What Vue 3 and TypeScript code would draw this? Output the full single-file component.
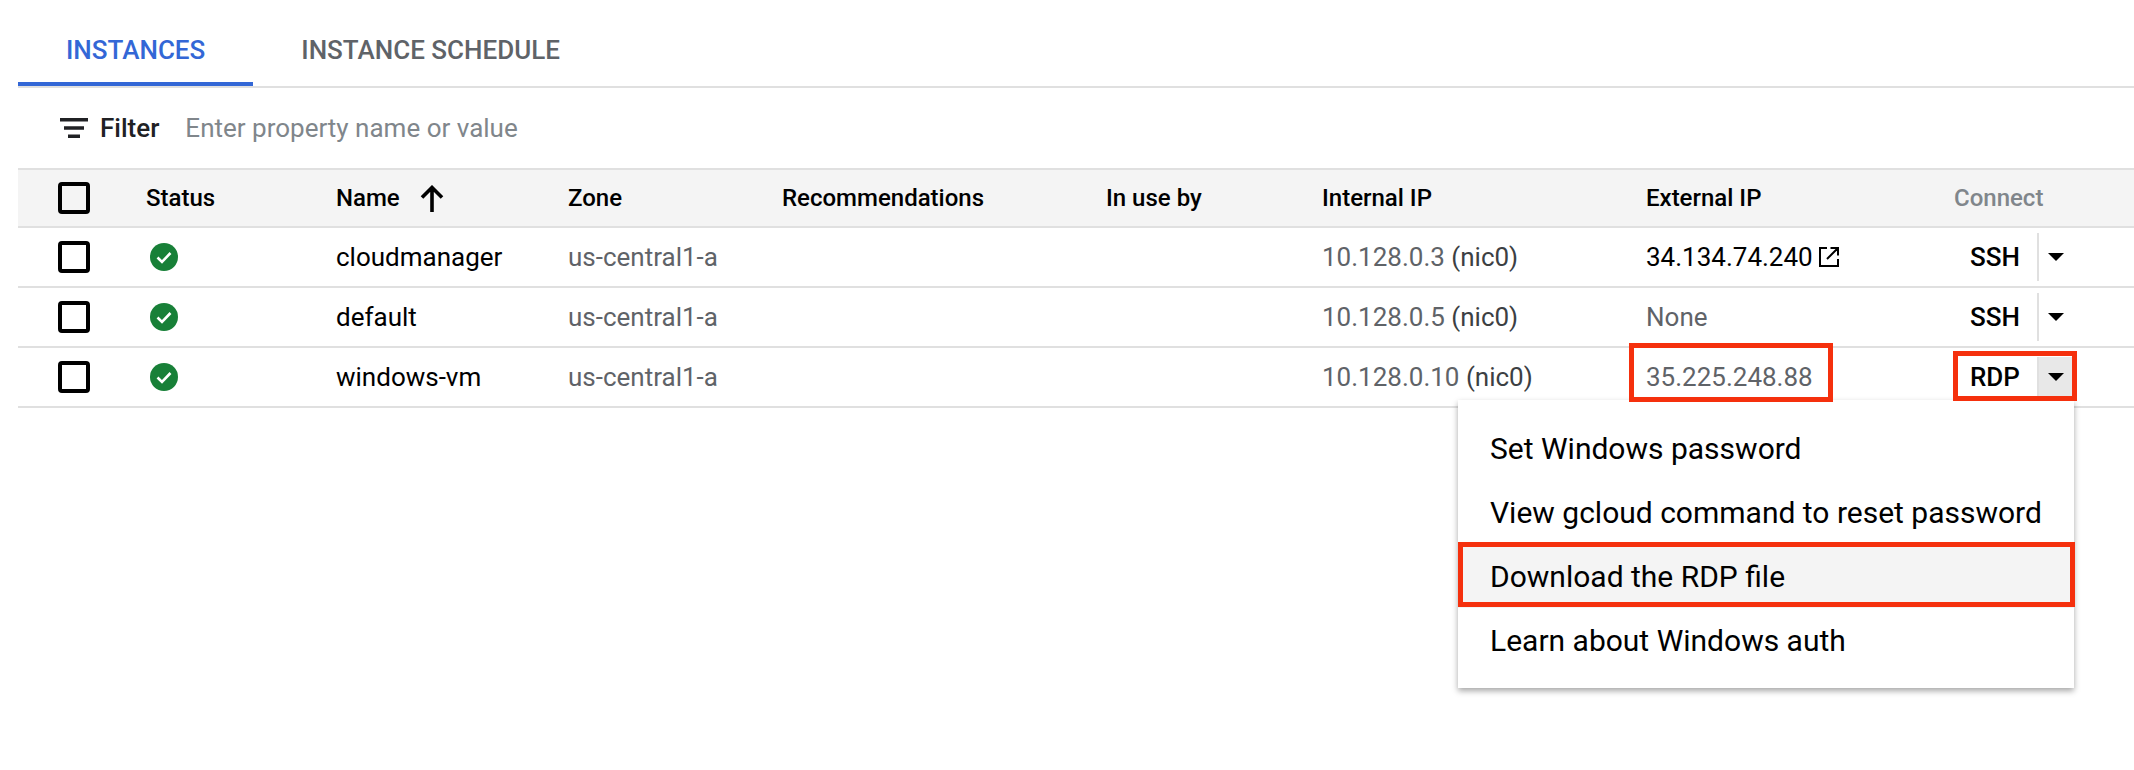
<script setup lang="ts">
interface Row {
  name: string
  zone: string
  internalIp: string
  externalIp: string
  externalKind: 'link' | 'none' | 'plain'
  connect: string
  open?: boolean
}

const rows: Row[] = [
  { name: 'cloudmanager', zone: 'us-central1-a', internalIp: '10.128.0.3', externalIp: '34.134.74.240', externalKind: 'link', connect: 'SSH' },
  { name: 'default', zone: 'us-central1-a', internalIp: '10.128.0.5', externalIp: 'None', externalKind: 'none', connect: 'SSH' },
  { name: 'windows-vm', zone: 'us-central1-a', internalIp: '10.128.0.10', externalIp: '35.225.248.88', externalKind: 'plain', connect: 'RDP', open: true },
]

const menuItems = [
  'Set Windows password',
  'View gcloud command to reset password',
  'Download the RDP file',
  'Learn about Windows auth',
]
</script>

<template>
  <div class="page">
    <nav class="tabs">
      <button class="tab active">INSTANCES</button>
      <button class="tab">INSTANCE SCHEDULE</button>
    </nav>

    <div class="filter">
      <svg class="filter-icon" width="28" height="20" viewBox="0 0 28 20">
        <path d="M0 0h28v3.5H0zM4 8.2h20v3.5H4zM8 16.5h12V20H8z" fill="#202124" />
      </svg>
      <span class="filter-label">Filter</span>
      <span class="filter-hint">Enter property name or value</span>
    </div>

    <div class="table">
      <div class="row head">
        <div class="cell"><span class="check"></span></div>
        <div class="cell">Status</div>
        <div class="cell">
          <span>Name</span>
          <svg class="sort" width="24" height="27" viewBox="0 0 24 27">
            <path d="M12 27V3M2 12.5 12 2.5l10 10" fill="none" stroke="#000" stroke-width="3.6" />
          </svg>
        </div>
        <div class="cell">Zone</div>
        <div class="cell">Recommendations</div>
        <div class="cell">In use by</div>
        <div class="cell">Internal IP</div>
        <div class="cell">External IP</div>
        <div class="cell connect-head">Connect</div>
      </div>

      <div v-for="row in rows" :key="row.name" class="row">
        <div class="cell"><span class="check"></span></div>
        <div class="cell">
          <svg class="status" width="28" height="28" viewBox="0 0 28 28">
            <circle cx="14" cy="14" r="14" fill="#188038" />
            <path d="M7.5 14.5 12 19l8.5-9" fill="none" stroke="#fff" stroke-width="2.6" />
          </svg>
        </div>
        <div class="cell">{{ row.name }}</div>
        <div class="cell muted">{{ row.zone }}</div>
        <div class="cell"></div>
        <div class="cell"></div>
        <div class="cell muted"><span>{{ row.internalIp }} <span class="nic">(nic0)</span></span></div>
        <div class="cell" :class="{ muted: row.externalKind !== 'link' }">
          <span>{{ row.externalIp }}</span>
          <svg v-if="row.externalKind === 'link'" class="ext" width="20" height="20" viewBox="0 0 20 20">
            <path d="M8 1H1v18h18v-7M11.5 1H19v7.5M19 1 8 12" fill="none" stroke="#000" stroke-width="2" />
          </svg>
        </div>
        <div class="cell">
          <div class="split" :class="{ open: row.open }">
            <span class="split-label">{{ row.connect }}</span>
            <span class="split-arrow"><i class="tri"></i></span>
          </div>
        </div>
      </div>
    </div>

    <ul class="menu">
      <li v-for="item in menuItems" :key="item" :class="{ hover: item.startsWith('Download') }">{{ item }}</li>
    </ul>

    <!-- red annotation boxes -->
    <div class="mark mark-ip"></div>
    <div class="mark mark-rdp"></div>
    <div class="mark mark-item"></div>
  </div>
</template>

<style>
body {
  background: #fff;
}
</style>

<style scoped>
.page {
  position: relative;
  width: 2134px;
  height: 770px;
  overflow: hidden;
  padding-left: 18px;
  box-sizing: border-box;
  font-family: Roboto, sans-serif;
  font-size: 26px;
  color: #000;
  background: #fff;
}

.tabs {
  display: flex;
  height: 88px;
  border-bottom: 2px solid #e0e0e0;
  box-sizing: border-box;
}

.tab {
  height: 86px;
  padding: 13px 48px 0;
  border: 0;
  background: transparent;
  font: 500 26px Roboto, sans-serif;
  color: #5f6368;
  box-sizing: border-box;
}

.tab.active {
  color: #3367d6;
  padding-top: 17px;
  border-bottom: 4px solid #3367d6;
}

.filter {
  display: flex;
  align-items: center;
  height: 80px;
  padding-left: 42px;
}

.filter-label {
  margin-left: 12px;
  font-weight: 500;
  color: #202124;
}

.filter-hint {
  margin-left: 26px;
  color: #80868b;
}

.row {
  display: grid;
  grid-template-columns: 128px 190px 232px 214px 324px 216px 324px 308px 1fr;
  height: 60px;
  border-bottom: 2px solid #e0e0e0;
  box-sizing: border-box;
}

.row.head {
  border-top: 2px solid #e0e0e0;
  background: #f4f4f4;
  font-size: 24px;
  font-weight: 500;
}

.cell {
  display: flex;
  align-items: center;
  white-space: pre;
}

.row .cell:first-child {
  padding-left: 40px;
}

.check {
  width: 32px;
  height: 32px;
  border: 4px solid #000;
  border-radius: 4px;
  box-sizing: border-box;
}

.status {
  margin-left: 4px;
}

.sort {
  margin-left: 20px;
}

.muted {
  color: #5f6368;
}

.nic {
  color: #3c4043;
}

.ext {
  margin-left: 6px;
}

.connect-head {
  color: #80868b;
}

.split {
  display: flex;
  align-items: center;
  height: 48px;
  margin-left: 16px;
  font-weight: 500;
}

.split-label {
  width: 67px;
}

.split-arrow {
  display: flex;
  align-items: center;
  justify-content: center;
  width: 36px;
  height: 48px;
  border-left: 2px solid #e0e0e0;
  box-sizing: border-box;
}

.split.open .split-arrow {
  height: 40px;
  background: #e8e8e8;
}

.tri {
  border-left: 8px solid transparent;
  border-right: 8px solid transparent;
  border-top: 8px solid #000;
}

.menu {
  position: absolute;
  left: 1458px;
  top: 400px;
  width: 616px;
  margin: 0;
  padding: 16px 0;
  list-style: none;
  background: #fff;
  box-shadow: 0 3px 6px rgba(0, 0, 0, 0.35);
  box-sizing: border-box;
}

.menu li {
  display: flex;
  align-items: center;
  height: 64px;
  padding-left: 32px;
  font-size: 30px;
}

.menu li.hover {
  background: #f4f4f4;
}

.mark {
  position: absolute;
  border: 5px solid #f5300d;
  box-sizing: border-box;
}

.mark-ip {
  left: 1629px;
  top: 343px;
  width: 204px;
  height: 59px;
}

.mark-rdp {
  left: 1953px;
  top: 351px;
  width: 124px;
  height: 50px;
}

.mark-item {
  left: 1458px;
  top: 542px;
  width: 617px;
  height: 65px;
}
</style>
